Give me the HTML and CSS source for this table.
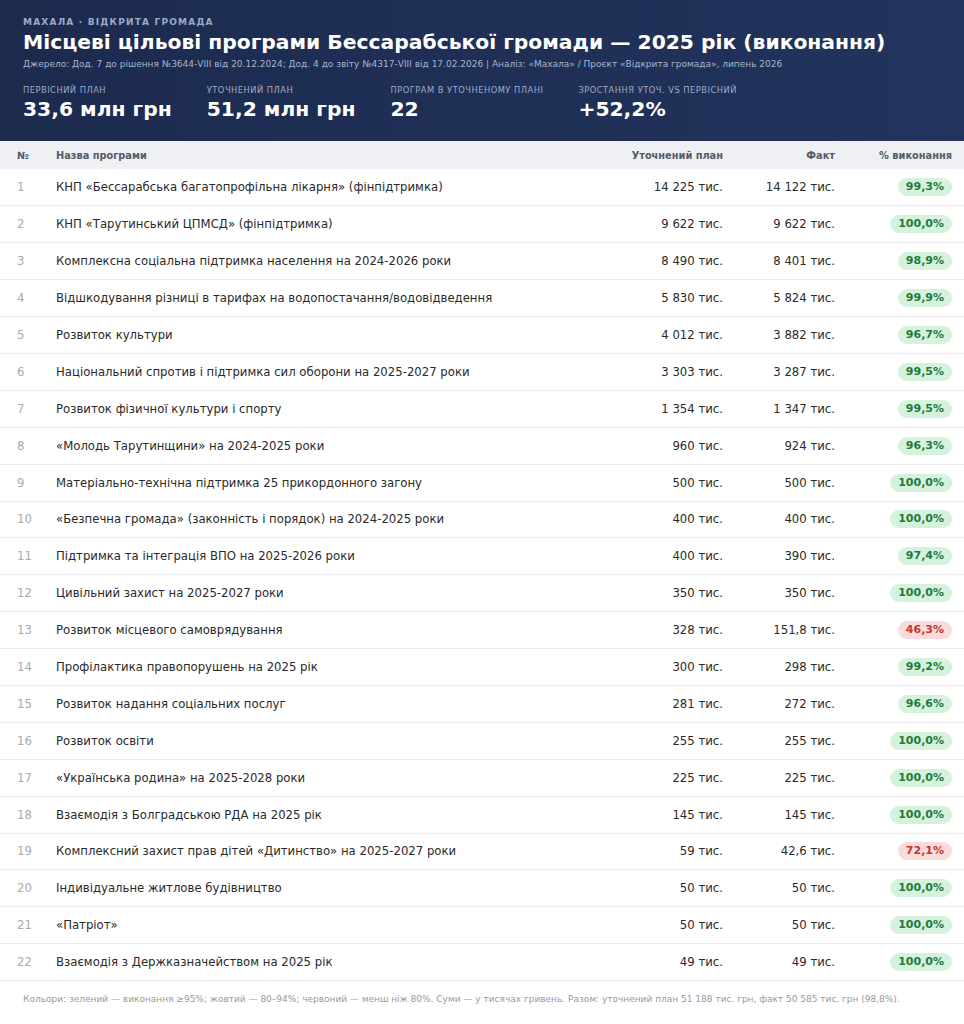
FILE: index.html
```html
<!DOCTYPE html>
<html lang="uk">
<head>
<meta charset="utf-8">
<title>Місцеві цільові програми</title>
<link rel="stylesheet" href="styles.css">
</head>
<body>
<header class="hero">
  <div class="kicker">МАХАЛА · ВІДКРИТА ГРОМАДА</div>
  <h1 class="title">Місцеві цільові програми Бессарабської громади — 2025 рік (виконання)</h1>
  <div class="source">Джерело: Дод. 7 до рішення №3644-VIII від 20.12.2024; Дод. 4 до звіту №4317-VIII від 17.02.2026 | Аналіз: «Махала» / Проєкт «Відкрита громада», липень 2026</div>
  <div class="stats">
    <div class="stat"><div class="stat-label">Первісний план</div><div class="stat-value">33,6 млн грн</div></div>
    <div class="stat"><div class="stat-label">Уточнений план</div><div class="stat-value">51,2 млн грн</div></div>
    <div class="stat"><div class="stat-label">Програм в уточненому плані</div><div class="stat-value">22</div></div>
    <div class="stat"><div class="stat-label">Зростання уточ. vs первісний</div><div class="stat-value">+52,2%</div></div>
  </div>
</header>
<table class="grid">
  <thead>
    <tr><th class="c-no">№</th><th class="c-name">Назва програми</th><th class="c-plan">Уточнений план</th><th class="c-fact">Факт</th><th class="c-pct">% виконання</th></tr>
  </thead>
  <tbody>
    <tr><td class="c-no">1</td><td class="c-name">КНП «Бессарабська багатопрофільна лікарня» (фінпідтримка)</td><td class="c-plan">14 225 тис.</td><td class="c-fact">14 122 тис.</td><td class="c-pct"><span class="badge ok">99,3%</span></td></tr>
    <tr><td class="c-no">2</td><td class="c-name">КНП «Тарутинський ЦПМСД» (фінпідтримка)</td><td class="c-plan">9 622 тис.</td><td class="c-fact">9 622 тис.</td><td class="c-pct"><span class="badge ok">100,0%</span></td></tr>
    <tr><td class="c-no">3</td><td class="c-name">Комплексна соціальна підтримка населення на 2024-2026 роки</td><td class="c-plan">8 490 тис.</td><td class="c-fact">8 401 тис.</td><td class="c-pct"><span class="badge ok">98,9%</span></td></tr>
    <tr><td class="c-no">4</td><td class="c-name">Відшкодування різниці в тарифах на водопостачання/водовідведення</td><td class="c-plan">5 830 тис.</td><td class="c-fact">5 824 тис.</td><td class="c-pct"><span class="badge ok">99,9%</span></td></tr>
    <tr><td class="c-no">5</td><td class="c-name">Розвиток культури</td><td class="c-plan">4 012 тис.</td><td class="c-fact">3 882 тис.</td><td class="c-pct"><span class="badge ok">96,7%</span></td></tr>
    <tr><td class="c-no">6</td><td class="c-name">Національний спротив і підтримка сил оборони на 2025-2027 роки</td><td class="c-plan">3 303 тис.</td><td class="c-fact">3 287 тис.</td><td class="c-pct"><span class="badge ok">99,5%</span></td></tr>
    <tr><td class="c-no">7</td><td class="c-name">Розвиток фізичної культури і спорту</td><td class="c-plan">1 354 тис.</td><td class="c-fact">1 347 тис.</td><td class="c-pct"><span class="badge ok">99,5%</span></td></tr>
    <tr><td class="c-no">8</td><td class="c-name">«Молодь Тарутинщини» на 2024-2025 роки</td><td class="c-plan">960 тис.</td><td class="c-fact">924 тис.</td><td class="c-pct"><span class="badge ok">96,3%</span></td></tr>
    <tr><td class="c-no">9</td><td class="c-name">Матеріально-технічна підтримка 25 прикордонного загону</td><td class="c-plan">500 тис.</td><td class="c-fact">500 тис.</td><td class="c-pct"><span class="badge ok">100,0%</span></td></tr>
    <tr><td class="c-no">10</td><td class="c-name">«Безпечна громада» (законність і порядок) на 2024-2025 роки</td><td class="c-plan">400 тис.</td><td class="c-fact">400 тис.</td><td class="c-pct"><span class="badge ok">100,0%</span></td></tr>
    <tr><td class="c-no">11</td><td class="c-name">Підтримка та інтеграція ВПО на 2025-2026 роки</td><td class="c-plan">400 тис.</td><td class="c-fact">390 тис.</td><td class="c-pct"><span class="badge ok">97,4%</span></td></tr>
    <tr><td class="c-no">12</td><td class="c-name">Цивільний захист на 2025-2027 роки</td><td class="c-plan">350 тис.</td><td class="c-fact">350 тис.</td><td class="c-pct"><span class="badge ok">100,0%</span></td></tr>
    <tr><td class="c-no">13</td><td class="c-name">Розвиток місцевого самоврядування</td><td class="c-plan">328 тис.</td><td class="c-fact">151,8 тис.</td><td class="c-pct"><span class="badge bad">46,3%</span></td></tr>
    <tr><td class="c-no">14</td><td class="c-name">Профілактика правопорушень на 2025 рік</td><td class="c-plan">300 тис.</td><td class="c-fact">298 тис.</td><td class="c-pct"><span class="badge ok">99,2%</span></td></tr>
    <tr><td class="c-no">15</td><td class="c-name">Розвиток надання соціальних послуг</td><td class="c-plan">281 тис.</td><td class="c-fact">272 тис.</td><td class="c-pct"><span class="badge ok">96,6%</span></td></tr>
    <tr><td class="c-no">16</td><td class="c-name">Розвиток освіти</td><td class="c-plan">255 тис.</td><td class="c-fact">255 тис.</td><td class="c-pct"><span class="badge ok">100,0%</span></td></tr>
    <tr><td class="c-no">17</td><td class="c-name">«Українська родина» на 2025-2028 роки</td><td class="c-plan">225 тис.</td><td class="c-fact">225 тис.</td><td class="c-pct"><span class="badge ok">100,0%</span></td></tr>
    <tr><td class="c-no">18</td><td class="c-name">Взаємодія з Болградською РДА на 2025 рік</td><td class="c-plan">145 тис.</td><td class="c-fact">145 тис.</td><td class="c-pct"><span class="badge ok">100,0%</span></td></tr>
    <tr><td class="c-no">19</td><td class="c-name">Комплексний захист прав дітей «Дитинство» на 2025-2027 роки</td><td class="c-plan">59 тис.</td><td class="c-fact">42,6 тис.</td><td class="c-pct"><span class="badge bad">72,1%</span></td></tr>
    <tr><td class="c-no">20</td><td class="c-name">Індивідуальне житлове будівництво</td><td class="c-plan">50 тис.</td><td class="c-fact">50 тис.</td><td class="c-pct"><span class="badge ok">100,0%</span></td></tr>
    <tr><td class="c-no">21</td><td class="c-name">«Патріот»</td><td class="c-plan">50 тис.</td><td class="c-fact">50 тис.</td><td class="c-pct"><span class="badge ok">100,0%</span></td></tr>
    <tr><td class="c-no">22</td><td class="c-name">Взаємодія з Держказначейством на 2025 рік</td><td class="c-plan">49 тис.</td><td class="c-fact">49 тис.</td><td class="c-pct"><span class="badge ok">100,0%</span></td></tr>
  </tbody>
</table>
<p class="note">Кольори: зелений — виконання ≥95%; жовтий — 80–94%; червоний — менш ніж 80%. Суми — у тисячах гривень. Разом: уточнений план 51 188 тис. грн, факт 50 585 тис. грн (98,8%).</p>
</body>
</html>
```
FILE: styles.css
```css
* { box-sizing: border-box; }
html, body { margin: 0; padding: 0; background: #ffffff; }
body {
  font-family: "DejaVu Sans", Verdana, sans-serif;
  color: #222;
  width: 964px;
}
.hero {
  background: linear-gradient(90deg, #1c2a4e 0%, #22345d 100%);
  color: #fff;
  padding: 16px 23px 0 23px;
  height: 141px;
}
.kicker {
  font-size: 9px;
  font-weight: bold;
  letter-spacing: 1.2px;
  color: #9aaac9;
  line-height: 13px;
}
.title {
  margin: 0;
  font-size: 20.3px;
  line-height: 26px;
  font-weight: bold;
  color: #fff;
}
.source {
  font-size: 9px;
  line-height: 14px;
  color: #a8b4cc;
  margin-top: 2px;
}
.stats {
  display: flex;
  gap: 35px;
  margin-top: 13px;
}
.stat-label {
  font-size: 8.3px;
  line-height: 12px;
  letter-spacing: 0.5px;
  text-transform: uppercase;
  color: #9fadc8;
}
.stat-value {
  font-size: 20.3px;
  font-weight: bold;
  line-height: 26px;
  margin-top: 0;
  color: #fff;
}
.grid {
  width: 964px;
  border-collapse: collapse;
}
.grid th {
  background: #eef0f4;
  color: #555b66;
  font-size: 9.8px;
  font-weight: bold;
  height: 28px;
  padding: 0 12px;
  text-align: left;
}
.grid td {
  height: 36.9px;
  padding: 0 12px;
  font-size: 11.7px;
  color: #2a2a2a;
  border-bottom: 1px solid #ececef;
  white-space: nowrap;
}
.grid .c-no { width: 44px; padding-left: 17px; padding-right: 0; color: #aaa; }
.grid th.c-no { color: #555b66; }
.grid .c-name { padding-left: 12px; }
.grid .c-plan { text-align: right; width: 160px; padding-right: 0; }
.grid .c-fact { text-align: right; width: 112px; padding-right: 0; }
.grid .c-pct { text-align: right; width: 129px; padding-right: 12px; }
.badge {
  display: inline-block;
  font-size: 11px;
  font-weight: bold;
  line-height: 18px;
  padding: 0 8px;
  border-radius: 9px;
}
.badge.ok { background: #d5f2dd; color: #1f7a3d; }
.badge.bad { background: #fadbdc; color: #c0392b; }
.note {
  margin: 0;
  padding: 13px 23px;
  font-size: 9px;
  color: #9a9a9a;
}
```
